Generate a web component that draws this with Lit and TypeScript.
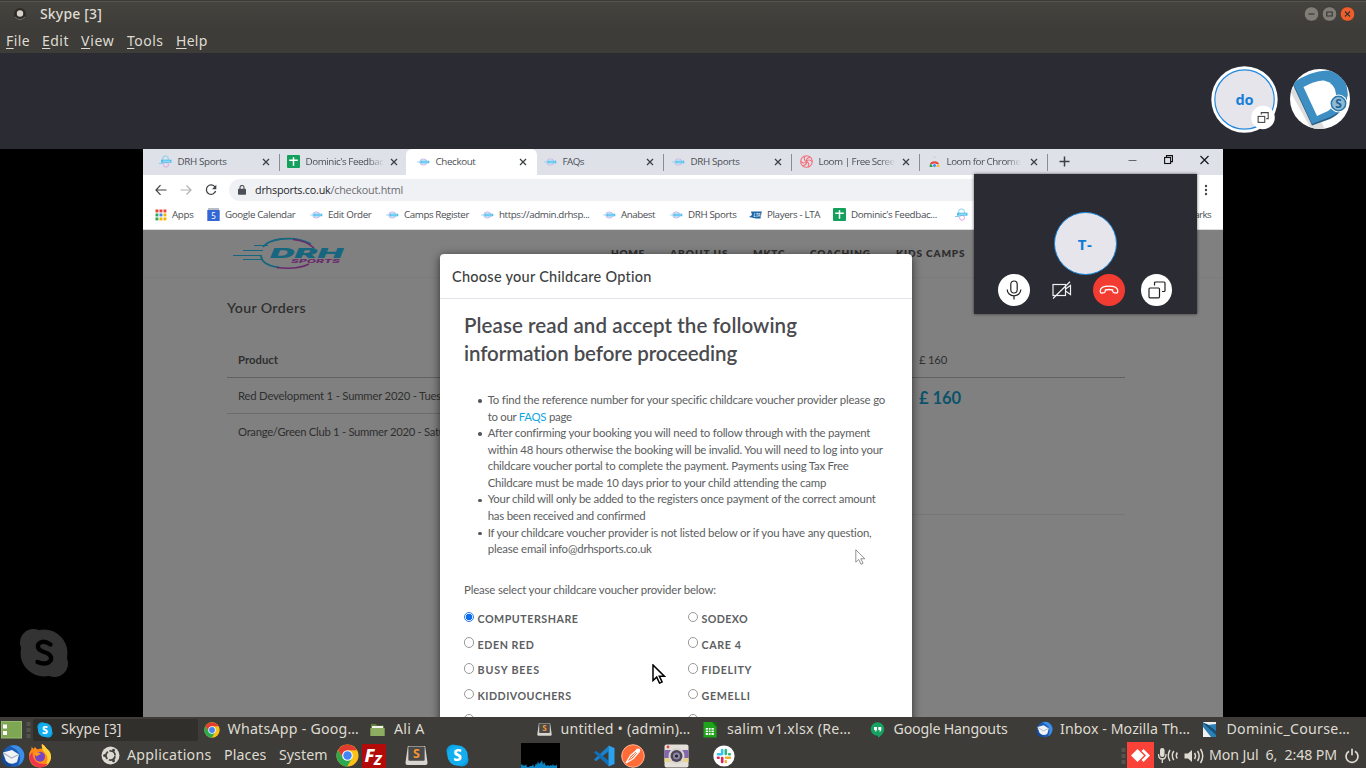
import { LitElement, html, css, svg, nothing } from "lit";
import { customElement, property } from "lit/decorators.js";

/** Inline label whose tracking is adjusted so it spans a given width. */
@customElement("fit-text")
class FitText extends LitElement {
  @property({ type: Number }) w = 0;
  static styles = css`
    :host { display: inline-block; white-space: nowrap; flex: none; justify-self: start; }
  `;
  firstUpdated() {
    const n = (this.textContent || "").length;
    const natural = this.getBoundingClientRect().width;
    const base = parseFloat(getComputedStyle(this).letterSpacing) || 0;
    if (n && this.w) this.style.letterSpacing = `${base + (this.w - natural) / n}px`;
  }
  render() { return html`<slot></slot>`; }
}

const t = (text: string, w: number, cls = "") => text ? html`<fit-text class=${cls} .w=${w}>${text}</fit-text>` : nothing;

/* ---------- icons ---------- */
const skype = (s: number) => html`<svg width=${s} height=${s} viewBox="0 0 24 24">
  <circle cx="7.5" cy="7.5" r="7" fill="#0a9fe0"/><circle cx="16.5" cy="16.5" r="7" fill="#0a9fe0"/>
  <circle cx="12" cy="12" r="10.6" fill="#13aeef"/>
  <text x="12" y="17.5" text-anchor="middle" font-size="16" font-weight="800" fill="#fff" font-family="Noto Sans, sans-serif">S</text></svg>`;
const chrome = (s: number) => html`<svg width=${s} height=${s} viewBox="0 0 24 24">
  <circle cx="12" cy="12" r="11.5" fill="#fbc116"/>
  <path d="M12 12 L12 6.5 H22 A11.5 11.5 0 0 0 2.1 6.2 L7.2 14.8Z" fill="#e33b2e"/>
  <path d="M2.1 6.2 A11.5 11.5 0 0 0 11.6 23.5 L16.8 14.7 L7.2 14.8Z" fill="#2da94f"/>
  <circle cx="12" cy="12" r="5.6" fill="#fff"/><circle cx="12" cy="12" r="4.4" fill="#4285f4"/></svg>`;
const folder = html`<svg width="15" height="14" viewBox="0 0 15 14">
  <path d="M1 1h5l1 1.5h7V12H1z" fill="#5c7f3a"/><path d="M2 3h11v3H2z" fill="#f4f4ee"/><path d="M.3 5h14.4v8H.3z" fill="#8dae61"/></svg>`;
const sublime = (s: number) => html`<svg width=${s} height=${s} viewBox="0 0 24 24">
  <path d="M3 2h18l2.5 17.5q0 2.5-2 2.5h-19Q.5 22 .5 19.500z" fill="#d8d5cf"/><rect x="3.5" y="2.500" width="17" height="15" rx="1" fill="#4a4a4a"/>
  <text x="12" y="14.500" text-anchor="middle" font-size="13" font-weight="700" fill="#f6962c" font-family="Noto Sans, sans-serif">S</text></svg>`;
const sheetFile = html`<svg width="14" height="16" viewBox="0 0 14 16"><path d="M.5 0H10l3.500 4V15.500H.5z" fill="#1fa31a"/><path d="M9 0h4.500v5z" fill="#116b0e"/>
  <rect x="2.800" y="6" width="8" height="7" fill="#fff"/><path d="M2.800 8.200h8M2.800 10.500h8M5.400 6v7M8 6v7" stroke="#1fa31a" stroke-width=".9"/></svg>`;
const hangouts = html`<svg width="15" height="16" viewBox="0 0 15 16"><path d="M7.500.3a6.800 6.800 0 0 1 6.800 6.800c0 3.500-3 6.800-6.300 8.700v-2.200A6.700 6.700 0 0 1 .7 7.100 6.800 6.800 0 0 1 7.500.3z" fill="#16a263"/>
  <path d="M4 5h3v3L6 9.500H5L5.500 8H4zM8.300 5h3v3l-1 1.500h-1L9.800 8H8.300z" fill="#fff"/></svg>`;
const thunderbird = (s: number) => html`<svg width=${s} height=${s} viewBox="0 0 24 24">
  <circle cx="12.500" cy="12" r="11" fill="#1d5cb4"/><path d="M9 1.800Q19-1 23 9q1 9-6 12.500Q22 12 15 5.500z" fill="#3c8fe6"/>
  <path d="M2 8.500 11 6l7 4.500L16 18q-6 4-11-1z" fill="#f1f3f6"/><path d="M2.500 9l8 5 7.500-3.500" fill="none" stroke="#a9b4c4" stroke-width="1.200"/>
  <path d="M0 15q2 7 8 8l4-2Q4 20 2.500 12z" fill="#17478f"/></svg>`;
const firefox = html`<svg width="24" height="24" viewBox="0 0 24 24"><path d="M7 3 9.500 5.500Q13 4 15 5 13 2 14 0q3 1.500 4.500 4.500Q23.500 8 23 14 21.500 23 12 23.500 2 23 1 13 1 8 3.500 5V2.500L5.500 5z" fill="#ff8a16"/>
  <path d="M14 0q3 1.500 4.500 4.500Q23.500 8 23 14 22 20 17 22.300 22 14 17 9 13 5 14 0z" fill="#ffd23a"/>
  <path d="M1 13q2 9.500 11 10.500 5 0 8-4-7 2-12-2-4-4-3.500-10z" fill="#f0354f"/><circle cx="12" cy="12.800" r="5" fill="#7645c5"/><path d="M6 9q4-2 7 1-3 .5-4.500 2.500z" fill="#ff9a1f"/></svg>`;
const ubuntu = html`<svg width="19" height="19" viewBox="0 0 19 19"><circle cx="9.500" cy="9.500" r="9" fill="#dcd9d2"/>
  <circle cx="9.500" cy="9.500" r="4.600" fill="none" stroke="#45433e" stroke-width="1.800" stroke-dasharray="8 1.630" stroke-dashoffset="-.8"/>
  <circle cx="3.600" cy="9.500" r="1.500" fill="#45433e"/><circle cx="12.500" cy="4.200" r="1.500" fill="#45433e"/><circle cx="12.500" cy="14.800" r="1.500" fill="#45433e"/></svg>`;
const filezilla = html`<svg width="24" height="24" viewBox="0 0 24 24"><rect width="24" height="24" fill="#b30a0a"/>
  <text x="2.500" y="18" font-size="18" font-style="italic" font-weight="800" fill="#fff" font-family="Noto Sans, sans-serif">F</text>
  <text x="12" y="21" font-size="14" font-style="italic" font-weight="800" fill="#fff" font-family="Noto Sans, sans-serif">Z</text></svg>`;
const vscode = html`<svg width="22" height="22" viewBox="0 0 22 22"><path d="M1 14.500 15.500 1v5.500L3 16.300z" fill="#1a82cc"/><path d="M1 7.500 15.500 21v-5.500L3 5.700z" fill="#1070b8"/><path d="M15.500.5 21.500 3v16l-6 2.500z" fill="#2ba2ee"/></svg>`;
const postman = html`<svg width="24" height="24" viewBox="0 0 24 24"><circle cx="12" cy="12" r="11.300" fill="#ff6c37" stroke="#ffb597" stroke-width="1"/>
  <path d="M5 19 9.500 11.500 15 7l2 2-4.500 5.500z" fill="none" stroke="#fff" stroke-width="1.300"/><path d="M9.500 14.500 16 8" stroke="#fff" stroke-width="1"/><circle cx="17" cy="6.800" r="2.300" fill="#fff"/></svg>`;
const camera = html`<svg width="25" height="24" viewBox="0 0 25 24"><rect x=".5" y=".5" width="24" height="23" rx="2" fill="#e4e0d9"/><rect x=".5" y="6" width="24" height="8" fill="#8468ad"/><rect x=".5" y="14" width="24" height="4" fill="#e6d58a"/>
  <circle cx="12.500" cy="12" r="8" fill="#d9d6d2"/><circle cx="12.500" cy="12" r="6" fill="#4c4657"/><circle cx="12.500" cy="12" r="3.500" fill="#8e87a5"/><circle cx="12.500" cy="12" r="1.600" fill="#26232f"/><circle cx="4" cy="3" r="1.400" fill="#e04848"/></svg>`;
const slack = html`<svg width="22" height="22" viewBox="0 0 22 22"><circle cx="11" cy="11" r="10.600" fill="#fff"/><g stroke-width="2.600" stroke-linecap="round">
  <path d="M9.200 5v3.800M5 9.200h3.500" stroke="#36c5f0"/><path d="M12.800 5v4M16.800 9.200h-.6" stroke="#2eb67d"/><path d="M17 12.800h-4M12.800 17v-.6" stroke="#ecb22e"/><path d="M9.200 17v-4M5 12.800h.6" stroke="#e01e5a"/></g></svg>`;
const cpuGraph = html`<svg width="39" height="26" viewBox="0 0 39 26"><rect width="39" height="26" fill="#000"/>
  <path d="M0 26V22l1-1 1 2 1-1 1 1 1-2 1 3 2 0 1-1 2 0 1-2 1 3 1-1 1-3 1 2 1-4 1 3 1-1 1-1 1-2 1 5 1-3 1 2 1 2 2-1 1 1 2-1 1 1 1-2 1 2 1-1 1 1 1-2V26z" fill="#0d86c8"/></svg>`;
const anydesk = html`<svg width="27" height="27" viewBox="0 0 27 27"><rect width="27" height="27" fill="#fb4238"/><path d="M4 13.500 10.500 7l6.500 6.500-6.500 6.500z" fill="#fff"/><path d="M14.500 9l2-2 6.500 6.500-6.500 6.500-2-2 4.500-4.500z" fill="#fff"/></svg>`;
const micTray = html`<svg width="21" height="18" viewBox="0 0 21 18"><rect x="2" y="1" width="4.500" height="9" rx="2.200" fill="#dfdbd2"/><path d="M.5 7q0 5 3.800 5T8 7M4.300 12v4" fill="none" stroke="#dfdbd2" stroke-width="1.300"/>
  <path d="M12 3q-3.500 5.500 0 11M15.800 4q-3 4.500 0 9M19.300 5.500q-2 3 0 6" fill="none" stroke="#dfdbd2" stroke-width="1.500"/></svg>`;
const volume = html`<svg width="21" height="18" viewBox="0 0 21 18"><path d="M.5 6.500H4L8 3v12l-4-3.500H.5z" fill="#dfdbd2"/><path d="M10.500 6q2 3 0 6M13.500 4q3.300 5 0 10M16.500 2q4.500 7 0 14" fill="none" stroke="#dfdbd2" stroke-width="1.500"/></svg>`;
const power = html`<svg width="16" height="16" viewBox="0 0 16 16"><path d="M5 3.200a6 6 0 1 0 6 0M8 .8v6.500" fill="none" stroke="#dfdbd2" stroke-width="1.700"/></svg>`;
const docD = html`<svg width="13" height="15" viewBox="0 0 13 15"><rect width="13" height="15" fill="#2c7fb3"/><path d="M0 0h13v2L4 3z" fill="#f0f0f0"/><path d="M0 5 8 15H0z" fill="#f2f2f2"/><path d="M0 1 13 13V9L4 2z" fill="#174f77"/></svg>`;
const showDesk = html`<svg width="21" height="18" viewBox="0 0 21 18"><rect x=".5" y=".5" width="20" height="16.500" fill="#7ea653" stroke="#96bb70"/><rect x="2" y="3.500" width="4" height="4" fill="#fff"/><rect x="2" y="10" width="4" height="4" fill="#fff"/></svg>`;
const grip = html`<svg width="5" height="18" viewBox="0 0 5 18"><path d="M.5 1h4v4h-4zM.5 7h4v4h-4zM.5 13h4v4h-4z" fill="#55534e"/></svg>`;

const drh = html`<svg width="13" height="12" viewBox="0 0 13 12"><ellipse cx="6.300" cy="6" rx="3.600" ry="3.100" fill="#d5eefa" stroke="#c9a9e6" stroke-width=".8"/><path d="M0 6h3" stroke="#9adcf5" stroke-width="1"/><path d="M3.500 6h8.800" stroke="#54c0ee" stroke-width="2.600"/><path d="M5 6h6" stroke="#bfe8f9" stroke-width=".6"/></svg>`;
const drhRound = html`<svg width="13" height="13" viewBox="0 0 13 13"><circle cx="6.500" cy="3.800" r="2.900" fill="none" stroke="#7dd0f2"/><circle cx="7" cy="9.700" r="2.500" fill="none" stroke="#e0a3e0"/><path d="M0 8.500h4" stroke="#7dd0f2"/><path d="M2 6.200h10.500" stroke="#4fbfee" stroke-width="3"/><path d="M4 6.200h7" stroke="#d3f0fb" stroke-width=".7"/></svg>`;
const gsheet = html`<svg width="13" height="13" viewBox="0 0 13 13"><rect width="13" height="13" rx="1" fill="#12a05c"/><path d="M6.500 2.200v8.600M2.200 5.200h8.600" stroke="#fff" stroke-width="1.500"/></svg>`;
const loom = html`<svg width="13" height="13" viewBox="0 0 13 13" fill="none" stroke="#f4707a" stroke-width="1.100"><circle cx="6.500" cy="6.500" r="5.800"/><path d="M6.500 6.500Q3 5 5 1M6.500 6.500Q6 2.500 10.500 2.500M6.500 6.500Q9 3.500 12 6.500M6.500 6.500q3.500 1.500 1.500 5.500M6.500 6.500Q7 10.500 2.500 10.500M6.500 6.500Q4 9.500 1 6.500"/></svg>`;
const store = html`<svg width="13" height="12" viewBox="0 0 13 12"><path d="M5 1.200h3" stroke="#ccc" stroke-width=".8"/><path d="M2 8A4.700 4 0 0 1 11 8z" fill="#e5463a"/><path d="M1.500 11q0-2.500 1-3.500L6 11z" fill="#2fa552"/><path d="M11.500 11q0-2.500-1-3.500L7 11z" fill="#f7c02c"/><circle cx="6.500" cy="9.500" r="1.900" fill="#4a84ee" stroke="#fff" stroke-width=".6"/></svg>`;
const calendar = html`<svg width="13" height="13" viewBox="0 0 13 13"><rect x="1" width="11" height="3" fill="#b9bcc4"/><rect x=".3" y="2" width="12.400" height="11" fill="#3367d6"/><text x="6.500" y="10.600" text-anchor="middle" font-size="8" fill="#fff" font-family="Noto Sans, sans-serif">5</text></svg>`;
const lta = html`<svg width="13" height="9" viewBox="0 0 13 9"><path d="M2 1.500h10.800L11.500 8.500H7L0 7 3 5z" fill="#1e66a5"/><text x="4.500" y="6.500" font-size="4.500" font-weight="700" font-style="italic" fill="#cfe3f3" font-family="Noto Sans, sans-serif">LTA</text></svg>`;
const apps = html`<svg width="12" height="12" viewBox="0 0 12 12">${["#e94435", "#e94435", "#e94435", "#34a853", "#4285f4", "#f4b400", "#34a853", "#f4b400", "#f4b400"].map((c, i) =>
  svg`<rect x=${0.500 + (i % 3) * 4} y=${0.500 + Math.floor(i / 3) * 4} width="2.900" height="2.900" fill=${c}/>`)}</svg>`;
const cross = html`<svg width="8" height="8" viewBox="0 0 8 8"><path d="M1 1l6 6M7 1 1 7" stroke="#3c4043" stroke-width="1.300"/></svg>`;

const popout = (s: number, c = "#222", w = 1.200) => html`<svg width=${s} height=${s} viewBox="0 0 18 18" fill="none" stroke=${c} stroke-width=${w}>
  <rect x="1" y="7" width="10.500" height="9.800" rx="1"/><path d="M6.500 4.500V2q0-1 1-1H16q1 0 1 1v7.500q0 1-1 1h-2"/></svg>`;

const drhLogo = html`<svg class="logo" width="112" height="34" viewBox="0 0 112 34">
  <g fill="none" stroke="#17667f" stroke-width="1"><path d="M0 18.500h28M10 13.500h20M10 22.500h20M21 8.500h14"/></g>
  <path d="M78 7Q66 0 48 2 34 4 30 10M28 18Q28 28 46 30.500" fill="none" stroke="#17667f" stroke-width="1.800"/>
  <path d="M60 2.500Q74 4 81 11M44 30.500Q64 33 76 27" fill="none" stroke="#6a2a6c" stroke-width="1.500"/>
  <text x="37" y="20.500" textLength="73" lengthAdjust="spacingAndGlyphs" font-size="13.500" font-weight="900" font-style="italic" fill="#17667f" font-family="Inter, sans-serif">DRH</text>
  <text x="58" y="26" textLength="49" lengthAdjust="spacingAndGlyphs" font-size="5.200" font-weight="800" font-style="italic" fill="#6a2a6c" font-family="Inter, sans-serif">SPORTS</text></svg>`;

const arrow = (s: number, stroke: string, sw: number) => html`<svg width=${s * 0.7} height=${s} viewBox="0 0 14 20">
  <path d="M1 1v15.500l3.700-3.400 2.800 6 2.600-1.200-2.800-5.700h5z" fill="#fff" stroke=${stroke} stroke-width=${sw}/></svg>`;

/* ---------- data ---------- */
const tabs: [any, string, number, boolean][] = [
  [drhRound, "DRH Sports", 49, false], [gsheet, "Dominic's Feedbac", 78, false], [drh, "Checkout", 40, true], [drh, "FAQs", 21.500, false],
  [drh, "DRH Sports", 49, false], [loom, "Loom | Free Scree", 76, false], [store, "Loom for Chrome", 74, false],
];
const marks: [any, string, number][] = [
  [apps, "Apps", 21.500], [calendar, "Google Calendar", 70.500], [drh, "Edit Order", 43.500], [drh, "Camps Register", 65], [drh, "https://admin.drhsp...", 90.500],
  [drh, "Anabest", 34], [drh, "DRH Sports", 48.500], [lta, "Players - LTA", 53], [gsheet, "Dominic's Feedbac...", 86], [drhRound, "", 0],
];
const providers: [string, number][][] = [
  [["COMPUTERSHARE", 101], ["SODEXO", 46.500]], [["EDEN RED", 57], ["CARE 4", 40]],
  [["BUSY BEES", 62.500], ["FIDELITY", 50.500]], [["KIDDIVOUCHERS", 94], ["GEMELLI", 49]], [["", 0], ["", 0]],
];
const tasks: [any, string, number][] = [
  [skype(16), "Skype [3]", 60.500], [chrome(16), "WhatsApp - Goog…", 131.500], [folder, "Ali A", 30.500], [sublime(15), "untitled • (admin)…", 130],
  [sheetFile, "salim v1.xlsx (Re…", 124], [hangouts, "Google Hangouts", 114], [thunderbird(17), "Inbox - Mozilla Th…", 130], [docD, "Dominic_Course…", 123.500],
];

@customElement("app-root")
class AppRoot extends LitElement {
  static styles = css`
    :host { display: flex; flex-direction: column; width: 1366px; height: 768px; overflow: hidden; background: #000; font-family: "Noto Sans", "Open Sans", sans-serif; }
    * { box-sizing: border-box; }
    svg { display: block; flex: none; }
    .titlebar { height: 28px; flex: none; display: flex; align-items: center; padding: 0 11px 0 12px; background: linear-gradient(#3c3b37 0 1px, #55534d 1px 2px, #45443f 2px, #3d3c38); color: #dfdbd2; font-size: 14px; font-weight: 500; }
    .titlebar fit-text { margin-left: 12px; padding-bottom: 2px; }
    .winbtns { margin-left: auto; display: flex; gap: 3px; }
    .menubar { height: 25px; flex: none; display: grid; grid-template-columns: 36px 39px 46px 49px auto; align-items: center; padding-left: 6px; background: #3d3c38; color: #dfdbd2; font-size: 14px; }
    .menubar u { text-underline-offset: 2px; }
    .callbar { height: 96px; flex: none; display: flex; justify-content: flex-end; align-items: flex-start; gap: 12.500px; padding: 12.500px 16px 0 0; background: #2b2b34; }
    .callbar .second { margin-top: 3.500px; }
    .stage { height: 568px; flex: none; display: flex; position: relative; background: #000; overflow: hidden; }
    .side { width: 143px; flex: none; display: flex; align-items: flex-end; padding: 0 0 40px 20px; }
    .screen { width: 1080px; flex: none; display: flex; flex-direction: column; background: #fff; font-family: "Open Sans", "Noto Sans", sans-serif; }
    .tabs { height: 26px; flex: none; display: flex; background: #dee1e8; padding-left: 9px; color: #4b4e54; font-size: 9.800px; }
    .tab { width: 128px; display: flex; align-items: center; padding: 0 9px 0 7px; height: 25px; border-right: 1px solid #8a8d93; border-image: linear-gradient(transparent 24%, #8a8d93 24% 84%, transparent 84%) 1; }
    .tab.flat { border-image: none; border-color: transparent; }
    .tab.on { background: #fff; height: 26px; border: 0; border-radius: 6px 6px 0 0; width: 131px; margin: 0 -1px 0 -2px; padding: 0 10px 1px 11px; }
    .tab.on ~ .tab { padding-left: 8px; }
    .tab fit-text { margin-left: 5.500px; }
    .tab svg:last-child { margin-left: auto; }
    .tab .fade { mask-image: linear-gradient(90deg, #000 80%, transparent); }
    .plus { margin: 7px 0 0 11px; }
    .ctl { margin: 5px 14px 0 auto; display: flex; gap: 27px; }
    .tools { height: 29px; flex: none; display: flex; align-items: center; padding-left: 12px; }
    .tools .nav { display: flex; gap: 13px; align-items: center; width: 74px; }
    .omni { width: 860px; height: 22px; border-radius: 11px; background: #f0f1f4; display: flex; align-items: center; gap: 9px; padding-left: 9px; font-size: 10.800px; color: #26282c; }
    .omni .path { color: #6a6d72; }
    .omni fit-text { padding-bottom: 1px; }
    .kebab { margin-left: 115px; }
    .marks { height: 26px; flex: none; display: grid; grid-template-columns: 52px 103px 76px 95px 122px 67px 79px 84px 122px 1fr auto; align-items: center; padding: 0 12px 4px; border-bottom: 1px solid #ddd; font-size: 9.800px; color: #4a4d52; }
    .mark { display: flex; align-items: center; gap: 5px; }
    .page { flex: 1; background: #808080; font-family: Lato, sans-serif; color: #2f2f2f; min-height: 0; }
    .site { height: 48px; display: flex; padding: 7px 0 0 90px; border-bottom: 1px solid #7b7b7b; }
    .links { display: grid; grid-template-columns: 59px 83px 57px 86px 80px; margin: 9px 0 0 266px; height: 14px; line-height: 14px; font-size: 10px; font-weight: 800; }
    .orders { padding: 18px 98px 0 84px; }
    .orders h3 { margin: 0; height: 24px; line-height: 24px; font-size: 14.200px; font-weight: 600; }
    .row { display: grid; grid-template-columns: 681px auto; align-items: center; height: 36px; padding-left: 11px; font-size: 11.300px; }
    .row.head { margin-top: 22px; border-bottom: 1px solid #606060; }
    .row.one { height: 35.500px; background: linear-gradient(#6c6c6c, #6c6c6c) 0 100% / 680px 1px no-repeat; }
    .row b { font-size: 11.300px; }
    .row .total { color: #0b536c; font-size: 16.500px; font-weight: 700; padding-top: 5px; }
    .totline { margin: 64.500px 0 0 680px; border-top: 1px solid #777; }
    .modal { position: absolute; left: 440px; top: 105px; width: 472px; height: 480px; background: #fff; border-radius: 4px 4px 0 0; box-shadow: 0 2px 10px rgba(0,0,0,.65); font-family: Lato, sans-serif; color: #5c5e61; }
    .modal header { height: 45px; padding: 11.500px 12px 0; border-bottom: 1px solid #e3e3ea; font-size: 14.500px; line-height: 22px; font-weight: 500; color: #3d3f42; }
    .body { padding: 12px 24px; }
    .body h2 { margin: 0 0 25px; font-size: 20.500px; line-height: 28px; font-weight: 600; color: #4a4b4f; }
    .body h2 fit-text { display: block; width: max-content; }
    ul { margin: 0; padding: 0 0 0 14px; font-size: 11.400px; line-height: 16.570px; list-style: none; }
    li { display: grid; grid-template-columns: 9.700px auto; grid-auto-rows: 16.570px; }
    li::before { content: ""; width: 3.600px; height: 3.600px; border-radius: 50%; background: #55575a; align-self: center; margin-top: 1.500px; }
    li fit-text { grid-column: 2; }
    a { color: #12a5e4; text-decoration: none; }
    .ask { margin: 23px 0 0; font-size: 11.400px; line-height: 17px; }
    .opts { display: grid; grid-template-columns: 224px auto; grid-auto-rows: 25.700px; margin-top: 7.500px; font-size: 10.700px; font-weight: 700; }
    .opt { display: flex; align-items: center; gap: 3.500px; padding-top: 1px; }
    .dot { width: 10.500px; height: 10.500px; flex: none; border: 1px solid #999; border-radius: 50%; margin-top: -3px; margin-left: -.5px; background: #fff; }
    .dot.on { border-color: #2a7de8; background: radial-gradient(circle, #0d6ff0 0 3px, #fff 3.600px); }
    .cursor { position: absolute; left: 652px; top: 515px; }
    .ghost { position: absolute; left: 855px; top: 400px; }
    .pip { position: absolute; left: 973.500px; top: 24.500px; width: 223.500px; height: 140px; background: #2b2b34; box-shadow: 0 0 3px rgba(0,0,0,.6); display: flex; flex-direction: column; align-items: center; padding-top: 38.500px; }
    .face { width: 63px; height: 63px; flex: none; border-radius: 50%; background: #e6e5ec; border: 1.500px solid #1482d8; display: flex; align-items: center; justify-content: center; color: #0f7bd6; font-size: 15px; font-weight: 700; }
    .ctrls { display: flex; gap: 16px; margin-top: -1px; }
    .btn { width: 31.500px; height: 32px; border-radius: 50%; background: #fff; display: flex; align-items: center; justify-content: center; }
    .btn.none { background: none; }
    .btn.end { background: #f23c32; }
    .panel { background: #3d3c38; color: #dfdbd2; font-size: 14.200px; height: 25px; flex: none; display: flex; align-items: center; }
    .panel fit-text { padding-bottom: 2px; }
    .deskbtn { width: 33px; display: flex; gap: 4px; padding-left: 1px; }
    .tasks { display: grid; grid-template-columns: repeat(8, 166.500px); }
    .task { display: flex; align-items: center; height: 22px; width: 165px; padding-left: 4px; border-radius: 2px; }
    .task.on { background: #302f2c; }
    .task .ic { width: 24px; flex: none; }
    .dock { height: 26px; display: grid; padding: 0 0 1px 1px; grid-template-columns: 27px 73px 26px 97px 55px 57px 26px 43px 41px 75px 72px 28px 43px 49px 408px 6px 31px 26px 25px 135px auto; }
  `;

  render() {
    return html`
      <div class="titlebar">
        <svg width="16" height="16" viewBox="0 0 16 16"><circle cx="8" cy="8" r="6" fill="#2c2b28"/><path d="M3 11q5 5 10 0" stroke="#77756f" fill="none"/><circle cx="8" cy="7.500" r="3.200" fill="#d6d2ca"/></svg>
        ${t("Skype [3]", 62)}
        <div class="winbtns">
          ${["M4.500 7.500h6", "M4.800 5.500h5.400v4h-5.400z", "M5 5l5 5M10 5l-5 5"].map((d, i) => html`<svg width="15" height="16" viewBox="0 0 15 15">
            <circle cx="7.500" cy="7.500" r="7.300" fill=${i == 2 ? "#ed5e2d" : "#7f7d76"} stroke="#33322f" stroke-width=".7"/><path d=${d} fill="none" stroke="#33322f" stroke-width="1.100"/></svg>`)}
        </div>
      </div>
      <div class="menubar">${([["File", 24], ["Edit", 27], ["View", 33.500], ["Tools", 36.500], ["Help", 31.500]] as [string, number][]).map(([s, w]) =>
        html`<span><fit-text .w=${w}><u>${s[0]}</u>${s.slice(1)}</fit-text></span>`)}</div>
      <div class="callbar">
        <svg width="67" height="67" viewBox="0 0 67 67"><circle cx="33.500" cy="33.500" r="33.200" fill="#fff"/><circle cx="33.500" cy="33.500" r="29.700" fill="#e6e5ec" stroke="#2389dc" stroke-width="1.200"/>
          <text x="33.500" y="38.500" text-anchor="middle" font-size="14.500" font-weight="700" fill="#1680d8">do</text>
          <circle cx="52" cy="51.500" r="11.800" fill="#fff"/><g transform="translate(46.500 46) scale(.63)" fill="none" stroke="#444" stroke-width="1.700"><rect x="1" y="7" width="10.500" height="9.500"/><path d="M6 4V1h11v9.500h-3"/></g></svg>
        <svg class="second" width="60" height="60" viewBox="0 0 60 60"><defs><clipPath id="c"><circle cx="30" cy="30" r="30"/></clipPath></defs><g clip-path="url(#c)"><rect width="60" height="60" fill="#fff"/>
          <path d="M0 22 21 60h14L10 14z" fill="#ddd"/>
          <path d="M3 16Q20 3 37 2.500 57 4 57.500 26 56 42 40 50L22 56.500z" fill="#2a5f86"/>
          <path d="M3 14Q20 2 37 1.500 57 3 57.500 25 56 41 40 48L22 55z" fill="#3c8ec3"/>
          <path d="M13.500 18Q26 11 34 11.500 45 14 46 25 46 37 38 42L27 47z" fill="#fff"/></g>
          <circle cx="48.500" cy="34.500" r="9" fill="#fff"/><circle cx="48.500" cy="34.500" r="7.200" fill="#8fbad6" stroke="#2c76a8" stroke-width="1.500"/><text x="48.500" y="39" text-anchor="middle" font-size="12" font-weight="700" fill="#24628e">S</text></svg>
      </div>

      <div class="stage">
        <div class="side"><svg width="48" height="48" viewBox="0 0 48 48" fill="#333"><circle cx="13.500" cy="13.500" r="13.500"/><circle cx="34.500" cy="34.500" r="13.500"/><circle cx="24" cy="24" r="23.500"/>
          <path d="M30.500 15.500Q23 10.500 18.500 15 16 20.500 24 23 32.500 25.500 31 31 26.500 37 17.500 33" fill="none" stroke="#000" stroke-width="4.400" stroke-linecap="round"/></svg></div>
        <div class="screen">
          <div class="tabs">
            ${tabs.map(([ic, s, w, on], i) => html`<div class="tab ${on ? "on" : i == 1 ? "flat" : ""}">${ic}${t(s, w, i == 1 || i > 4 ? "fade" : "")}${cross}</div>`)}
            <svg class="plus" width="11" height="11" viewBox="0 0 11 11"><path d="M5.500.5v10M.5 5.500h10" stroke="#3c4043" stroke-width="1.500"/></svg>
            <div class="ctl">
              <svg width="9" height="12" viewBox="0 0 9 12"><path d="M.5 6.500h8" stroke="#666"/></svg>
              <svg width="9" height="12" viewBox="0 0 9 12" fill="none" stroke="#111" stroke-width="1.100"><rect x=".6" y="3.500" width="6" height="6"/><path d="M2.500 3.500V1.600h6v6H6.600"/></svg>
              <svg width="9" height="12" viewBox="0 0 9 12"><path d="M.5 2l8 8M8.500 2l-8 8" stroke="#111" stroke-width="1.100"/></svg>
            </div>
          </div>
          <div class="tools">
            <div class="nav">
              <svg width="12" height="12" viewBox="0 0 12 12" fill="none" stroke="#3f4247" stroke-width="1.200"><path d="M11.500 6H1M5.500 1.200 1 6l4.500 4.800"/></svg>
              <svg width="12" height="12" viewBox="0 0 12 12" fill="none" stroke="#b0b2b6" stroke-width="1.200"><path d="M.5 6H11M6.500 1.500 11 6l-4.500 4.500"/></svg>
              <svg width="12" height="12" viewBox="0 0 12 12"><path d="M10 3A4.700 4.700 0 1 0 10.600 7" fill="none" stroke="#3f4247" stroke-width="1.300"/><path d="M11.300.8v4.400H7z" fill="#3f4247"/></svg>
            </div>
            <div class="omni">
              <svg width="8" height="10" viewBox="0 0 8 10"><rect y="3.800" width="8" height="6" rx=".8" fill="#4c4f54"/><path d="M2 4V2.500a2 2 0 0 1 4 0V4" fill="none" stroke="#4c4f54" stroke-width="1.100"/></svg>
              <fit-text .w=${148}>drhsports.co.uk<span class="path">/checkout.html</span></fit-text>
            </div>
            <svg class="kebab" width="4" height="12" viewBox="0 0 4 12" fill="#44474b"><circle cx="2" cy="2" r="1.200"/><circle cx="2" cy="6" r="1.200"/><circle cx="2" cy="10" r="1.200"/></svg>
          </div>
          <div class="marks">${marks.map(([ic, s, w]) => html`<div class="mark">${ic}${t(s, w)}</div>`)}${t("Other bookmarks", 71)}</div>
          <div class="page">
            <div class="site">${drhLogo}
              <nav class="links">${([["HOME", 34], ["ABOUT US", 58.500], ["MKTC", 32.500], ["COACHING", 61], ["KIDS CAMPS", 69.500]] as [string, number][]).map(([s, w]) => html`<span>${t(s, w)}</span>`)}</nav>
            </div>
            <div class="orders">
              <h3>${t("Your Orders", 79)}</h3>
              <div class="row head"><b>${t("Product", 40)}</b><span>${t("£ 160", 28)}</span></div>
              <div class="row one"><span>${t("Red Development 1 - Summer 2020 - Tuesday", 220)}</span><span class="total">${t("£ 160", 42)}</span></div>
              <div class="row"><span>${t("Orange/Green Club 1 - Summer 2020 - Saturday", 227)}</span></div>
              <div class="totline"></div>
            </div>
          </div>
        </div>

        <section class="modal">
          <header>${t("Choose your Childcare Option", 200)}</header>
          <div class="body">
            <h2>${t("Please read and accept the following", 333)}${t("information before proceeding", 273.500)}</h2>
            <ul>
              <li>${t("To find the reference number for your specific childcare voucher provider please go", 397)}
                <fit-text .w=${84}>to our <a>FAQS</a> page</fit-text></li>
              <li>${t("After confirming your booking you will need to follow through with the payment", 382)}
                ${t("within 48 hours otherwise the booking will be invalid. You will need to log into your", 395)}
                ${t("childcare voucher portal to complete the payment. Payments using Tax Free", 361)}
                ${t("Childcare must be made 10 days prior to your child attending the camp", 338)}</li>
              <li>${t("Your child will only be added to the registers once payment of the correct amount", 388)}
                ${t("has been received and confirmed", 157.500)}</li>
              <li>${t("If your childcare voucher provider is not listed below or if you have any question,", 384)}
                ${t("please email info@drhsports.co.uk", 164)}</li>
            </ul>
            <p class="ask">${t("Please select your childcare voucher provider below:", 252)}</p>
            <div class="opts">${providers.flat().map(([s, w], i) => html`<label class="opt"><span class="dot ${i ? "" : "on"}"></span>${t(s, w)}</label>`)}</div>
          </div>
        </section>
        <div class="ghost">${arrow(16, "#777", 1)}</div>
        <div class="cursor">${arrow(20, "#000", 1.500)}</div>
        <div class="pip">
          <div class="face">${t("T-", 15)}</div>
          <div class="ctrls">
            <div class="btn"><svg width="16" height="20" viewBox="0 0 16 20" fill="none" stroke="#222" stroke-width="1.200"><rect x="4.800" y="1" width="6.400" height="12" rx="3.200"/><path d="M1.200 9.500a6.800 6.300 0 0 0 13.600 0M8 16v3.500"/></svg></div>
            <div class="btn none"><svg width="20" height="18" viewBox="0 0 20 18" fill="none" stroke="#f0f0f2" stroke-width="1.200"><rect x="1" y="3.500" width="12.500" height="11"/><path d="M13.500 8l5-3.500v9l-5-3.500M1 17.500 18 .8"/></svg></div>
            <div class="btn end"><svg width="20" height="10" viewBox="0 0 20 10"><path d="M1.200 6Q1.500 1.200 10 1.200T18.800 6q0 2-1.200 2.200l-3-.6q-1-.3-1-2.600-3.600-1-7.200 0 0 2.300-1 2.600l-3 .6Q1.200 8 1.200 6z" fill="none" stroke="#fff" stroke-width="1.300"/></svg></div>
            <div class="btn">${popout(18)}</div>
          </div>
        </div>
      </div>

      <div class="panel">
        <div class="deskbtn">${showDesk}${grip}</div>
        <div class="tasks">${tasks.map(([ic, s, w], i) => html`<div class="task ${i ? "" : "on"}"><span class="ic">${ic}</span>${t(s, w)}</div>`)}</div>
      </div>
      <div class="panel dock">
        ${thunderbird(24)}${firefox}${ubuntu}${t("Applications", 84.500)}${t("Places", 42.500)}${t("System", 48.500)}${chrome(23)}${filezilla}${sublime(23)}${skype(23)}${cpuGraph}${vscode}${postman}${camera}${slack}${grip}${anydesk}${micTray}${volume}${t("Mon Jul \u00a06, \u00a02:48 PM", 128)}${power}
      </div>`;
  }
}
